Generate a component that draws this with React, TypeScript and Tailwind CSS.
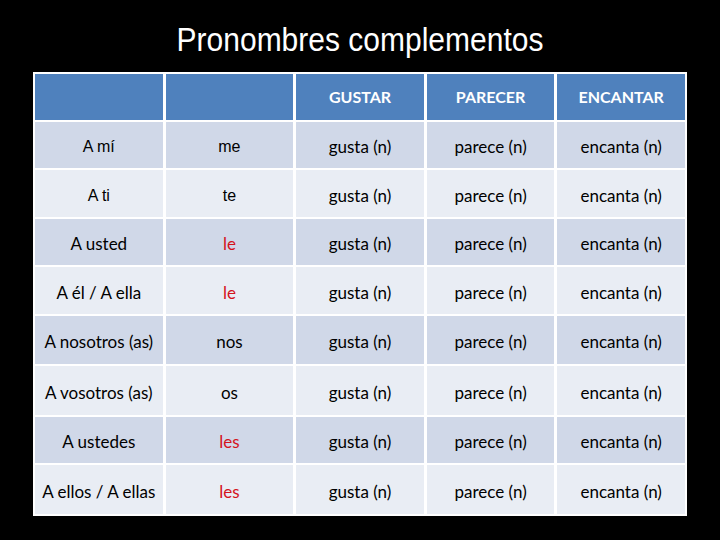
import React from "react";

const rows: { a: string; b: string; red?: boolean; arial?: boolean }[] = [
  { a: "A mí", b: "me", arial: true },
  { a: "A ti", b: "te", arial: true },
  { a: "A usted", b: "le", red: true },
  { a: "A él / A ella", b: "le", red: true },
  { a: "A nosotros (as)", b: "nos" },
  { a: "A vosotros (as)", b: "os" },
  { a: "A ustedes", b: "les", red: true },
  { a: "A ellos / A ellas", b: "les", red: true },
];

const heights = ["h-[46px]", "h-[47px]", "h-[46px]", "h-[47px]", "h-[48px]", "h-[49px]", "h-[46px]", "h-[49px]"];

export default function App() {
  const cal = "font-['Lato'] text-[17px]";
  const ari = "font-['Liberation_Sans'] text-[16px]";
  return (
    <div className="w-[720px] h-[540px] bg-black flex flex-col items-center overflow-hidden">
      <div className="h-[72px] w-full flex items-start justify-center pt-[23px]">
        <h1 className="font-['Liberation_Sans'] text-[30px] leading-[34px] text-white scale-y-[1.12]">
          Pronombres complementos
        </h1>
      </div>
      <div className="w-[654px] bg-white p-[2px] flex flex-col gap-y-[2px]">
        <div className="grid grid-cols-5 gap-x-[3px] h-[46px]">
          <div className="bg-[#4f81bd]" />
          <div className="bg-[#4f81bd]" />
          {["GUSTAR", "PARECER", "ENCANTAR"].map((t) => (
            <div key={t} className="bg-[#4f81bd] flex items-center justify-center text-white font-bold font-['Lato'] text-[16px]">
              {t}
            </div>
          ))}
        </div>
        {rows.map((r, i) => {
          const bg = i % 2 === 0 ? "bg-[#d0d8e8]" : "bg-[#e9edf4]";
          const cell = `${bg} flex items-center justify-center pt-[4px]`;
          return (
            <div key={i} className={`grid grid-cols-5 gap-x-[3px] ${heights[i]}`}>
              <div className={`${cell} text-black ${r.arial ? ari : cal}`}>{r.a}</div>
              <div className={`${cell} ${r.red ? "text-[#d4141c]" : "text-black"} ${r.arial ? ari : cal}`}>{r.b}</div>
              <div className={`${cell} text-black ${cal}`}>gusta (n)</div>
              <div className={`${cell} text-black ${cal}`}>parece (n)</div>
              <div className={`${cell} text-black ${cal}`}>encanta (n)</div>
            </div>
          );
        })}
      </div>
    </div>
  );
}
